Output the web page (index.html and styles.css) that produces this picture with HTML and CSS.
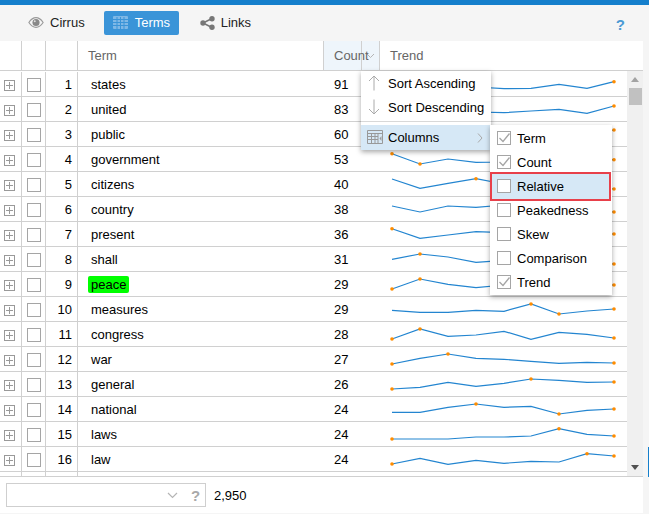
FILE: index.html
```html
<!DOCTYPE html>
<html lang="en">
<head>
<meta charset="utf-8">
<title>Terms</title>
<link rel="stylesheet" href="styles.css">
</head>
<body>
<div class="app">
  <div class="topbar"></div>
  <div class="toolbar">
    <a class="tab tab-plain">
      <svg class="tab-icon" width="16" height="13" viewBox="0 0 18 14"><path d="M1 7C3.5 3.2 6 1.6 9 1.6S14.5 3.2 17 7C14.5 10.8 12 12.4 9 12.4S3.500 10.800 1 7Z" fill="none" stroke="#999" stroke-width="1.300"/><circle cx="9" cy="7" r="4" fill="#888"/><circle cx="7.600" cy="5.500" r="1.100" fill="#ddd"/></svg>
      Cirrus
    </a>
    <a class="tab tab-active">
      <svg class="tab-icon" width="15" height="13" viewBox="0 0 15 13"><rect width="15" height="13" rx="1" fill="#7fb8e6"/><path d="M0 3.500H15M0 6.500H15M0 9.500H15M4 1V13M7.500 1V13M11 1V13" stroke="#3a94d8" stroke-width="1"/></svg>
      Terms
    </a>
    <a class="tab tab-plain">
      <svg class="tab-icon" width="15" height="14" viewBox="0 0 15 14"><path d="M3 7L12 2.500M3 7L12 11.500" stroke="#777" stroke-width="1.500"/><circle cx="3" cy="7" r="2.700" fill="#777"/><circle cx="12" cy="2.700" r="2.700" fill="#777"/><circle cx="12" cy="11.300" r="2.700" fill="#777"/></svg>
      Links
    </a>
    <span class="toolbar-fill"></span>
    <span class="help">?</span>
  </div>

  <div class="grid">
    <div class="grid-head">
      <div class="hcell hc-exp"></div>
      <div class="hcell hc-check"></div>
      <div class="hcell hc-rank"></div>
      <div class="hcell hc-term">Term</div>
      <div class="hcell hc-count"><span class="count-label">Count</span><span class="count-trigger"><svg width="9" height="6" viewBox="0 0 9 6"><path d="M1 1L4.500 4.500L8 1" fill="none" stroke="#b5b5b5"/></svg></span></div>
      <div class="hcell hc-trend">Trend</div>
    </div>
    <div class="grid-body">
      <div class="rows">
        <table class="terms">
          <colgroup><col class="c1"><col class="c2"><col class="c3"><col class="c4"><col class="c5"><col class="c6"></colgroup>
          <tbody>
            <tr><td class="exp"><i class="plus"></i></td><td class="chk"><i class="box"></i></td><td class="rank">1</td><td class="term">states</td><td class="count">91</td><td class="trend"><svg class="spark" viewBox="0 1 240 24"><polyline points="12,14 40,12 68,15 96,16 124,17.700 151,17.300 179,13.300 207,17.300 234,10.700"/><circle cx="234" cy="10.700" r="1.800"/></svg></td></tr>
            <tr><td class="exp"><i class="plus"></i></td><td class="chk"><i class="box"></i></td><td class="rank">2</td><td class="term">united</td><td class="count">83</td><td class="trend"><svg class="spark" viewBox="0 1 240 24"><polyline points="12,14 40,12 68,15 96,16 124,16.700 151,15 179,13.300 207,17.300 234,10"/><circle cx="234" cy="10" r="1.800"/></svg></td></tr>
            <tr><td class="exp"><i class="plus"></i></td><td class="chk"><i class="box"></i></td><td class="rank">3</td><td class="term">public</td><td class="count">60</td><td class="trend"><svg class="spark" viewBox="0 1 240 24"><polyline points="12,14 40,12 68,15 96,16 124,16 151,15 179,14 207,13 234,9"/><circle cx="234" cy="9" r="1.800"/></svg></td></tr>
            <tr><td class="exp"><i class="plus"></i></td><td class="chk"><i class="box"></i></td><td class="rank">4</td><td class="term">government</td><td class="count">53</td><td class="trend"><svg class="spark" viewBox="0 1 240 24"><polyline points="12,7.700 40,18 68,13 96,16.300 124,16 151,15 179,14 207,15 234,13.700"/><circle cx="12" cy="7.700" r="1.800"/><circle cx="40" cy="18" r="1.800"/><circle cx="234" cy="13.700" r="1.800"/></svg></td></tr>
            <tr><td class="exp"><i class="plus"></i></td><td class="chk"><i class="box"></i></td><td class="rank">5</td><td class="term">citizens</td><td class="count">40</td><td class="trend"><svg class="spark" viewBox="0 1 240 24"><polyline points="12,8 40,17.300 68,12.300 96,7.700 124,13 151,15 179,14 207,15 234,18"/><circle cx="96" cy="7.700" r="1.800"/><circle cx="234" cy="18" r="1.800"/></svg></td></tr>
            <tr><td class="exp"><i class="plus"></i></td><td class="chk"><i class="box"></i></td><td class="rank">6</td><td class="term">country</td><td class="count">38</td><td class="trend"><svg class="spark" viewBox="0 1 240 24"><polyline points="12,10 40,16 68,10 96,11.300 124,9 151,12 179,13 207,14 234,16"/><circle cx="234" cy="16" r="1.800"/></svg></td></tr>
            <tr><td class="exp"><i class="plus"></i></td><td class="chk"><i class="box"></i></td><td class="rank">7</td><td class="term">present</td><td class="count">36</td><td class="trend"><svg class="spark" viewBox="0 1 240 24"><polyline points="12,7.700 40,17.300 68,14 96,10.700 124,11.700 151,12 179,14 207,13 234,13"/><circle cx="12" cy="7.700" r="1.800"/><circle cx="234" cy="13" r="1.800"/></svg></td></tr>
            <tr><td class="exp"><i class="plus"></i></td><td class="chk"><i class="box"></i></td><td class="rank">8</td><td class="term">shall</td><td class="count">31</td><td class="trend"><svg class="spark" viewBox="0 1 240 24"><polyline points="12,13.300 40,8 68,11 96,16.300 124,14.300 151,15 179,16 207,17 234,18"/><circle cx="40" cy="8" r="1.800"/><circle cx="234" cy="18" r="1.800"/></svg></td></tr>
            <tr><td class="exp"><i class="plus"></i></td><td class="chk"><i class="box"></i></td><td class="rank">9</td><td class="term"><mark class="hit">peace</mark></td><td class="count">29</td><td class="trend"><svg class="spark" viewBox="0 1 240 24"><polyline points="12,18 40,8 68,13.300 96,16.700 124,14 151,15 179,13 207,14 234,14"/><circle cx="12" cy="18" r="1.800"/><circle cx="40" cy="8" r="1.800"/><circle cx="234" cy="14" r="1.800"/></svg></td></tr>
            <tr><td class="exp"><i class="plus"></i></td><td class="chk"><i class="box"></i></td><td class="rank">10</td><td class="term">measures</td><td class="count">29</td><td class="trend"><svg class="spark" viewBox="0 1 240 24"><polyline points="12,14.300 40,16.300 68,16.300 96,14.300 124,15.300 151,8 179,18 207,15 234,13"/><circle cx="151" cy="8" r="1.800"/><circle cx="179" cy="18" r="1.800"/><circle cx="234" cy="13" r="1.800"/></svg></td></tr>
            <tr><td class="exp"><i class="plus"></i></td><td class="chk"><i class="box"></i></td><td class="rank">11</td><td class="term">congress</td><td class="count">28</td><td class="trend"><svg class="spark" viewBox="0 1 240 24"><polyline points="12,18 40,8 68,15.300 96,14 124,10.300 151,18.300 179,11.300 207,13.300 234,17"/><circle cx="12" cy="18" r="1.800"/><circle cx="40" cy="8" r="1.800"/><circle cx="234" cy="17" r="1.800"/></svg></td></tr>
            <tr><td class="exp"><i class="plus"></i></td><td class="chk"><i class="box"></i></td><td class="rank">12</td><td class="term">war</td><td class="count">27</td><td class="trend"><svg class="spark" viewBox="0 1 240 24"><polyline points="12,18 40,12.300 68,8 96,12.300 124,13.300 151,15.300 179,17.300 207,16.300 234,17"/><circle cx="12" cy="18" r="1.800"/><circle cx="68" cy="8" r="1.800"/><circle cx="234" cy="17" r="1.800"/></svg></td></tr>
            <tr><td class="exp"><i class="plus"></i></td><td class="chk"><i class="box"></i></td><td class="rank">13</td><td class="term">general</td><td class="count">26</td><td class="trend"><svg class="spark" viewBox="0 1 240 24"><polyline points="12,18 40,16.300 68,11.300 96,15.300 124,12.300 151,8 179,9.300 207,11.300 234,11"/><circle cx="12" cy="18" r="1.800"/><circle cx="151" cy="8" r="1.800"/><circle cx="234" cy="11" r="1.800"/></svg></td></tr>
            <tr><td class="exp"><i class="plus"></i></td><td class="chk"><i class="box"></i></td><td class="rank">14</td><td class="term">national</td><td class="count">24</td><td class="trend"><svg class="spark" viewBox="0 1 240 24"><polyline points="12,16.300 40,16.300 68,11.300 96,8 124,11.300 151,10.300 179,18 207,14.300 234,13"/><circle cx="96" cy="8" r="1.800"/><circle cx="179" cy="18" r="1.800"/><circle cx="234" cy="13" r="1.800"/></svg></td></tr>
            <tr><td class="exp"><i class="plus"></i></td><td class="chk"><i class="box"></i></td><td class="rank">15</td><td class="term">laws</td><td class="count">24</td><td class="trend"><svg class="spark" viewBox="0 1 240 24"><polyline points="12,18 40,18 68,18 96,16 124,16 151,15 179,7.700 207,13.300 234,15"/><circle cx="12" cy="18" r="1.800"/><circle cx="179" cy="7.700" r="1.800"/><circle cx="234" cy="15" r="1.800"/></svg></td></tr>
            <tr><td class="exp"><i class="plus"></i></td><td class="chk"><i class="box"></i></td><td class="rank">16</td><td class="term">law</td><td class="count">24</td><td class="trend"><svg class="spark" viewBox="0 1 240 24"><polyline points="12,18 40,12.300 68,18.300 96,14.300 124,17.300 151,15.300 179,16 207,7.700 234,10"/><circle cx="12" cy="18" r="1.800"/><circle cx="207" cy="7.700" r="1.800"/><circle cx="234" cy="10" r="1.800"/></svg></td></tr>
            <tr><td class="exp"></td><td class="chk"></td><td class="rank"></td><td class="term"></td><td class="count"></td><td class="trend"></td></tr>
          </tbody>
        </table>
      </div>
      <div class="scrollbar">
        <span class="arrow-up"></span>
        <span class="thumb"></span>
        <span class="scroll-fill"></span>
        <span class="arrow-down"></span>
      </div>
    </div>
  </div>

  <div class="footer">
    <div class="combo">
      <span class="combo-input"></span>
      <svg class="combo-chevron" width="11" height="7" viewBox="0 0 11 7"><path d="M1 1L5.500 5.500L10 1" fill="none" stroke="#b5b5b5" stroke-width="1.200"/></svg>
      <span class="combo-help">?</span>
    </div>
    <span class="total">2,950</span>
  </div>

  <div class="edge-marker"></div>

  <div class="menu">
    <div class="menu-item">
      <svg class="menu-icon" width="14" height="16" viewBox="0 0 14 16"><path d="M7 15.500V1M2 6L7 1L12 6" fill="none" stroke="#aaa"/></svg>
      Sort Ascending
    </div>
    <div class="menu-item">
      <svg class="menu-icon" width="14" height="16" viewBox="0 0 14 16"><path d="M7 .5V15M2 10L7 15L12 10" fill="none" stroke="#aaa"/></svg>
      Sort Descending
    </div>
    <div class="menu-sep"></div>
    <div class="menu-item menu-item-active menu-columns">
      <svg class="menu-icon" width="16" height="14" viewBox="0 0 16 14"><path d="M.5.5H15.500V13.500H.5ZM.5 3.500H15.500M4.500 3.500V13.500M8 3.500V13.500M11 3.500V13.500M1 6.500H11M1 9.500H11" fill="none" stroke="#999"/><path d="M14.500 6V11L12.500 8.500Z" fill="#999"/></svg>
      Columns
      <svg class="menu-arrow" width="6" height="10" viewBox="0 0 6 10"><path d="M1 .5L5 5L1 9.500" fill="none" stroke="#a9a9a9"/></svg>
    </div>
  </div>

  <div class="submenu">
    <div class="sub-item"><i class="box box-on"><svg width="14" height="14" viewBox="0 0 14 14"><path d="M2.500 7L6 10.500L12.500 2.500" fill="none" stroke="#a5a5a5" stroke-width="1.300"/></svg></i>Term</div>
    <div class="sub-item"><i class="box box-on"><svg width="14" height="14" viewBox="0 0 14 14"><path d="M2.500 7L6 10.500L12.500 2.500" fill="none" stroke="#a5a5a5" stroke-width="1.300"/></svg></i>Count</div>
    <div class="sub-item sub-item-active"><i class="box box-on"></i>Relative</div>
    <div class="sub-item"><i class="box box-on"></i>Peakedness</div>
    <div class="sub-item"><i class="box box-on"></i>Skew</div>
    <div class="sub-item"><i class="box box-on"></i>Comparison</div>
    <div class="sub-item"><i class="box box-on"><svg width="14" height="14" viewBox="0 0 14 14"><path d="M2.500 7L6 10.500L12.500 2.500" fill="none" stroke="#a5a5a5" stroke-width="1.300"/></svg></i>Trend</div>
  </div>
</div>
</body>
</html>
```

FILE: styles.css
```css
* { box-sizing: border-box; }
html, body { margin: 0; padding: 0; }
body { font-family: "Liberation Sans", Arial, sans-serif; font-size: 13px; color: #000; background: #f5f5f5; }

.app { position: relative; width: 649px; height: 514px; display: flex; flex-direction: column; overflow: hidden; }
.topbar { height: 5px; background: #157fcc; flex: none; }

.toolbar { height: 36px; flex: none; display: flex; align-items: center; padding: 0 24px 1px 20px; background: #f5f5f5; }
.tab { height: 24px; display: flex; align-items: center; color: #222; }
.tab-plain { padding: 0 8px; }
.tab-plain:first-child { margin-right: 11px; }
.tab-active { width: 75px; padding-left: 9px; background: #3a94d8; color: #fff; border-radius: 2px; margin-right: 13px; }
.tab-icon { margin-right: 6px; flex: none; }
.tab-plain + .tab-active .tab-icon { margin-right: 7px; }
.toolbar-fill { flex: 1; }
.help { margin-top: 3px; font: bold 15px "Liberation Sans", Arial, sans-serif; color: #4a9ad4; }

.grid { flex: none; height: 436px; width: 643px; display: flex; flex-direction: column; background: #fff; }
.grid-head { height: 30px; flex: none; display: flex; border-bottom: 1px solid #d0d0d0; color: #666; line-height: 29px; }
.hcell { height: 29px; border-right: 1px solid #d0d0d0; }
.hc-exp { width: 22px; }
.hc-check { width: 24px; }
.hc-rank { width: 32px; }
.hc-term { width: 246px; padding-left: 10px; }
.hc-count { width: 56px; display: flex; background: #eef5fb; }
.count-label { position: relative; z-index: 1; width: 38px; padding-left: 10px; border-right: 1px solid #d0d0d0; white-space: nowrap; }
.count-trigger { flex: 1; display: flex; align-items: center; justify-content: center; }
.hc-trend { flex: 1; padding-left: 10px; border-right: 0; }

.grid-body { height: 406px; flex: none; display: flex; border-bottom: 1px solid #d0d0d0; }
.rows { width: 627px; height: 405px; padding-top: 1px; overflow: hidden; }
.terms { width: 627px; table-layout: fixed; border-collapse: separate; border-spacing: 0; }
.c1 { width: 22px; }
.c2 { width: 24px; }
.c3 { width: 32px; }
.c4 { width: 246px; }
.c5 { width: 56px; }
.c6 { width: 247px; }
.terms td { height: 25px; padding: 0; border-bottom: 1px solid #d0d0d0; line-height: 22px; vertical-align: top; }
.terms .rank, .terms .term, .terms .count { padding-top: 2px; }
.exp, .chk, .rank { border-right: 1px solid #d0d0d0; }
.terms .exp { padding-left: 4px; }
.terms .chk { padding-left: 5px; }
.terms .rank { text-align: right; padding-right: 5px; }
.terms .term { padding-left: 13px; }
.terms .count { padding-left: 10px; }
.trend { overflow: hidden; }

.plus { display: block; width: 11px; height: 11px; margin-top: 8px; border: 1px solid #999; background: linear-gradient(#999, #999) center / 7px 1px no-repeat, linear-gradient(#999, #999) center / 1px 7px no-repeat; }
.box { display: block; width: 14px; height: 14px; margin-top: 6px; border: 1px solid #a5a5a5; background: #fff; }
.hit { margin-left: -3px; padding: 1px 3px; background: #00ff00; border-radius: 2px; }

.spark { display: block; width: 240px; height: 24px; overflow: hidden; }
.spark polyline { fill: none; stroke: #2385d0; stroke-width: 1.200; }
.spark circle { fill: #ff8c00; }

.scrollbar { width: 16px; height: 405px; display: flex; flex-direction: column; align-items: center; background: #f0f0f0; padding-top: 6px; }
.arrow-up { width: 0; height: 0; border: 4px solid transparent; border-top: 0; border-bottom: 5px solid #a3a3a3; }
.thumb { width: 13px; height: 17px; margin-top: 6px; background: #c1c1c1; }
.scroll-fill { flex: 1; }
.arrow-down { width: 0; height: 0; margin-bottom: 6px; border: 4px solid transparent; border-bottom: 0; border-top: 5px solid #505050; }

.footer { height: 36px; width: 643px; flex: none; display: flex; align-items: center; padding: 0 0 0 6px; background: #fff; }
.combo { width: 200px; height: 24px; display: flex; align-items: center; border: 1px solid #cfcfcf; background: #fff; }
.combo-input { flex: 1; }
.combo-chevron { margin-right: 13px; }
.combo-help { width: 14px; font-weight: bold; font-size: 15px; color: #a9a9a9; }
.total { margin-left: 8px; }

.edge-marker { position: absolute; left: 648px; top: 447px; width: 1px; height: 30px; background: #157fcc; }

.menu { position: absolute; left: 361px; top: 71px; width: 130px; height: 79px; background: #fff; box-shadow: 0 2px 5px rgba(0, 0, 0, .35); z-index: 2; }
.menu-item { height: 24px; display: flex; align-items: center; padding-left: 27px; position: relative; white-space: nowrap; }
.menu-icon { position: absolute; left: 6px; top: 4px; }
.menu-sep { height: 1px; margin: 2px 0 3px; background: #d8d8d8; }
.menu-item-active { background: #d6e8f6; }
.menu-columns { height: 25px; }
.menu-columns .menu-icon { top: 5px; }
.menu-arrow { position: absolute; right: 8px; top: 8px; }

.submenu { position: absolute; left: 490px; top: 125px; width: 122px; height: 170px; padding-top: 1px; background: #fff; box-shadow: 0 2px 5px rgba(0, 0, 0, .35); z-index: 3; }
.sub-item { height: 24px; display: flex; align-items: center; padding-left: 7px; white-space: nowrap; }
.sub-item .box { margin: 0 6px 0 0; flex: none; }
.box svg { display: block; margin: -1px; }
.sub-item-active { background: #d6e8f6; outline: 2px solid #e8404a; outline-offset: -1px; height: 27px; margin: 0 2px -3px 1px; padding-left: 6px; position: relative; top: -1.500px; }
```
